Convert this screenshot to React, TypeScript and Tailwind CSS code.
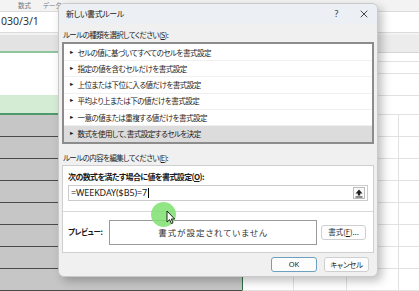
const jp = "font-['Noto_Sans_CJK_JP','Noto_Sans',sans-serif] [font-feature-settings:'palt']";

const rules = [
  "セルの値に基づいてすべてのセルを書式設定",
  "指定の値を含むセルだけを書式設定",
  "上位または下位に入る値だけを書式設定",
  "平均より上または下の値だけを書式設定",
  "一意の値または重複する値だけを書式設定",
  "数式を使用して、書式設定するセルを決定",
];

function GridRow({ left, leftLine }: { left: string; leftLine: string }) {
  return (
    <div className="flex h-[22px]">
      <div className={`w-[242px] shrink-0 border-b ${left} ${leftLine}`} />
      <div className="w-[51px] shrink-0 border-b border-l border-b-[#e2e2e2] border-l-[#2f6f47] bg-white" />
      <div className="w-[53px] shrink-0 border-b border-l border-[#e2e2e2] bg-white" />
      <div className="w-[52px] shrink-0 border-b border-l border-[#e2e2e2] bg-white" />
      <div className="flex-1 border-b border-l border-[#e2e2e2] bg-white" />
    </div>
  );
}

function Spreadsheet() {
  return (
    <div className={`flex flex-col ${jp}`}>
      {/* ribbon tabs (the rest sit behind the dialog) */}
      <div className="flex h-[11px] items-center gap-[12px] bg-[#f3f3f3] pl-[18px] text-[6.5px] leading-none text-[#777]">
        <span>数式</span>
        <span>データ</span>
      </div>
      {/* formula bar */}
      <div className="flex h-[22px] items-center overflow-hidden border-y border-[#dcdcdc] bg-white text-[10.5px] text-[#333]">
        <span className="pl-px font-['Noto_Sans',sans-serif]">030/3/1</span>
      </div>
      <div className="h-[2px] bg-[#f3f3f3]" />
      {/* column header */}
      <div className="flex h-[18px]">
        <div className="w-[242px] border-b-2 border-[#8fc59d] bg-[#e3e3e3]" />
        <div className="flex-1 border-b border-[#d6d6d6] bg-[#ececec]" />
      </div>
      {/* white rows */}
      <div className="flex h-[42px]">
        <div className="w-[242px] bg-white" />
        <div className="flex flex-1 flex-col bg-white">
          <div className="h-[9px] border-b border-[#e2e2e2]" />
          <div className="h-[12px] border-b border-[#e2e2e2]" />
        </div>
      </div>
      {/* selected green row */}
      <div className="flex h-[20px]">
        <div className="w-[242px] border-b-2 border-[#4f9a6a] bg-[#d4ecd4]" />
        <div className="flex-1 border-y border-[#e2e2e2] bg-white" />
      </div>
      {Array.from({ length: 8 }).map((_, i) => (
        <GridRow key={i} left="bg-[#c6c6c6]" leftLine="border-b-[#4a4a4a]" />
      ))}
    </div>
  );
}

function UploadIcon() {
  return (
    <svg width="8" height="9" viewBox="0 0 8 9">
      <path d="M4 0.5 L7.5 4.5 H5.2 V6.5 H2.8 V4.5 H0.5 Z" fill="#222" />
      <rect x="0.5" y="7.5" width="7" height="1" fill="#222" />
    </svg>
  );
}

function Cursor() {
  return (
    <svg width="10" height="15" viewBox="0 0 10 15">
      <path
        d="M1 1 L1 12 L3.6 9.6 L5.4 13.6 L7 12.9 L5.3 9 L8.6 9 Z"
        fill="#fff"
        stroke="#111"
        strokeWidth="0.9"
        strokeLinejoin="round"
      />
    </svg>
  );
}

function Dialog() {
  return (
    <div
      className={`absolute left-[58px] top-[3px] flex h-[274px] w-[320px] flex-col overflow-hidden rounded-[6px] border border-[#c9c9c9] bg-[#f0f0f0] text-[#1a1a1a] shadow-[4px_4px_10px_rgba(0,0,0,0.25)] ${jp}`}
    >
      {/* title bar */}
      <div className="flex h-[20px] shrink-0 items-center bg-[#ecf0f4] pl-[7px] pr-[9px] text-[8px] tracking-[-0.4px]">
        <span>新しい書式ルール</span>
        <span className="ml-auto mr-[22px] font-['Noto_Sans',sans-serif] text-[9px] text-[#333]">?</span>
        <svg width="8" height="8" viewBox="0 0 8 8">
          <path d="M0.7 0.7 L7.3 7.3 M7.3 0.7 L0.7 7.3" stroke="#333" strokeWidth="0.9" />
        </svg>
      </div>

      <div className="flex flex-col px-[3px]">
        <div className="flex h-[18px] items-end pb-[2px] pl-[1px] text-[7.5px] tracking-[-0.6px] text-[#222]">
          <span>
            ルールの種類を選択してください(<span className="underline">S</span>):
          </span>
        </div>

        {/* rule list */}
        <div className="flex h-[102px] flex-col border-2 border-[#8c8c8c] bg-white pt-[1px]">
          {rules.map((r, i) => (
            <div
              key={r}
              className={`flex h-[16.5px] items-center gap-[3px] pl-[5px] text-[7.5px] tracking-[-0.5px] ${
                i === rules.length - 1 ? "bg-[#dcdcdc]" : "border-b border-[#f0f0f0]"
              }`}
            >
              <span className="text-[5.5px] leading-none tracking-normal">►</span>
              <span>{r}</span>
            </div>
          ))}
        </div>

        <div className="flex h-[21px] items-end pb-[2px] pl-[1px] text-[7.5px] tracking-[-0.6px] text-[#222]">
          <span>
            ルールの内容を編集してください(<span className="underline">E</span>):
          </span>
        </div>

        {/* rule description panel */}
        <div className="relative flex h-[88px] flex-col border border-[#cfcfcf] bg-white">
          <div className="flex flex-col px-[5px] pt-[5px]">
            <div className="h-[14px] text-[8px] font-bold tracking-[-0.6px]">
              次の数式を満たす場合に値を書式設定(<span className="underline">O</span>):
            </div>
            <div className="flex h-[16px] items-center border border-[#cccccc] pl-[2px] pr-[2px]">
              <span className="font-['Noto_Sans',sans-serif] text-[9px] tracking-[-0.1px]">=WEEKDAY($B5)=7</span>
              <span className="ml-[0.5px] h-[10px] w-px bg-black" />
              <div className="ml-auto flex h-[12px] w-[12px] items-center justify-center border border-[#bdbdbd] bg-[#fafafa]">
                <UploadIcon />
              </div>
            </div>
          </div>
          <div className="mt-[10px] border-t border-[#d8d8d8]" />
          <div className="flex flex-1 items-center pl-[5px] pr-[7px]">
            <span className="w-[41px] text-[7.5px] font-bold tracking-[-0.4px]">プレビュー:</span>
            <div className="flex h-[25px] w-[208px] items-center justify-center border border-[#9a9a9a] text-[8.5px] tracking-[1px] text-[#333]">
              書式が設定されていません
            </div>
            <div className="ml-auto flex h-[15px] w-[45px] items-center justify-center rounded-[3px] border border-[#cfcfcf] bg-[#fdfdfd] text-[7.5px]">
              書式(<span className="underline">F</span>)...
            </div>
          </div>

          {/* click highlight + pointer */}
          <div className="absolute left-[88px] top-[36px] h-[25px] w-[25px] rounded-full bg-[#7fe070]/85" />
          <div className="absolute left-[103px] top-[44px]">
            <Cursor />
          </div>
        </div>

        {/* footer buttons */}
        <div className="flex items-center justify-end gap-[7px] pr-[5px] pt-[4px]">
          <div className="flex h-[15px] w-[46px] items-center justify-center rounded-[3px] border-[1.5px] border-[#6d9fc0] bg-[#fdfdfd] font-['Noto_Sans',sans-serif] text-[7.5px]">
            OK
          </div>
          <div className="flex h-[15px] w-[45px] items-center justify-center rounded-[3px] border border-[#cfcfcf] bg-[#fdfdfd] text-[7.5px] tracking-[-0.3px]">
            キャンセル
          </div>
        </div>
      </div>
    </div>
  );
}

export default function App() {
  return (
    <div className="relative h-[291px] w-[419px] overflow-hidden bg-white">
      <Spreadsheet />
      <Dialog />
    </div>
  );
}
